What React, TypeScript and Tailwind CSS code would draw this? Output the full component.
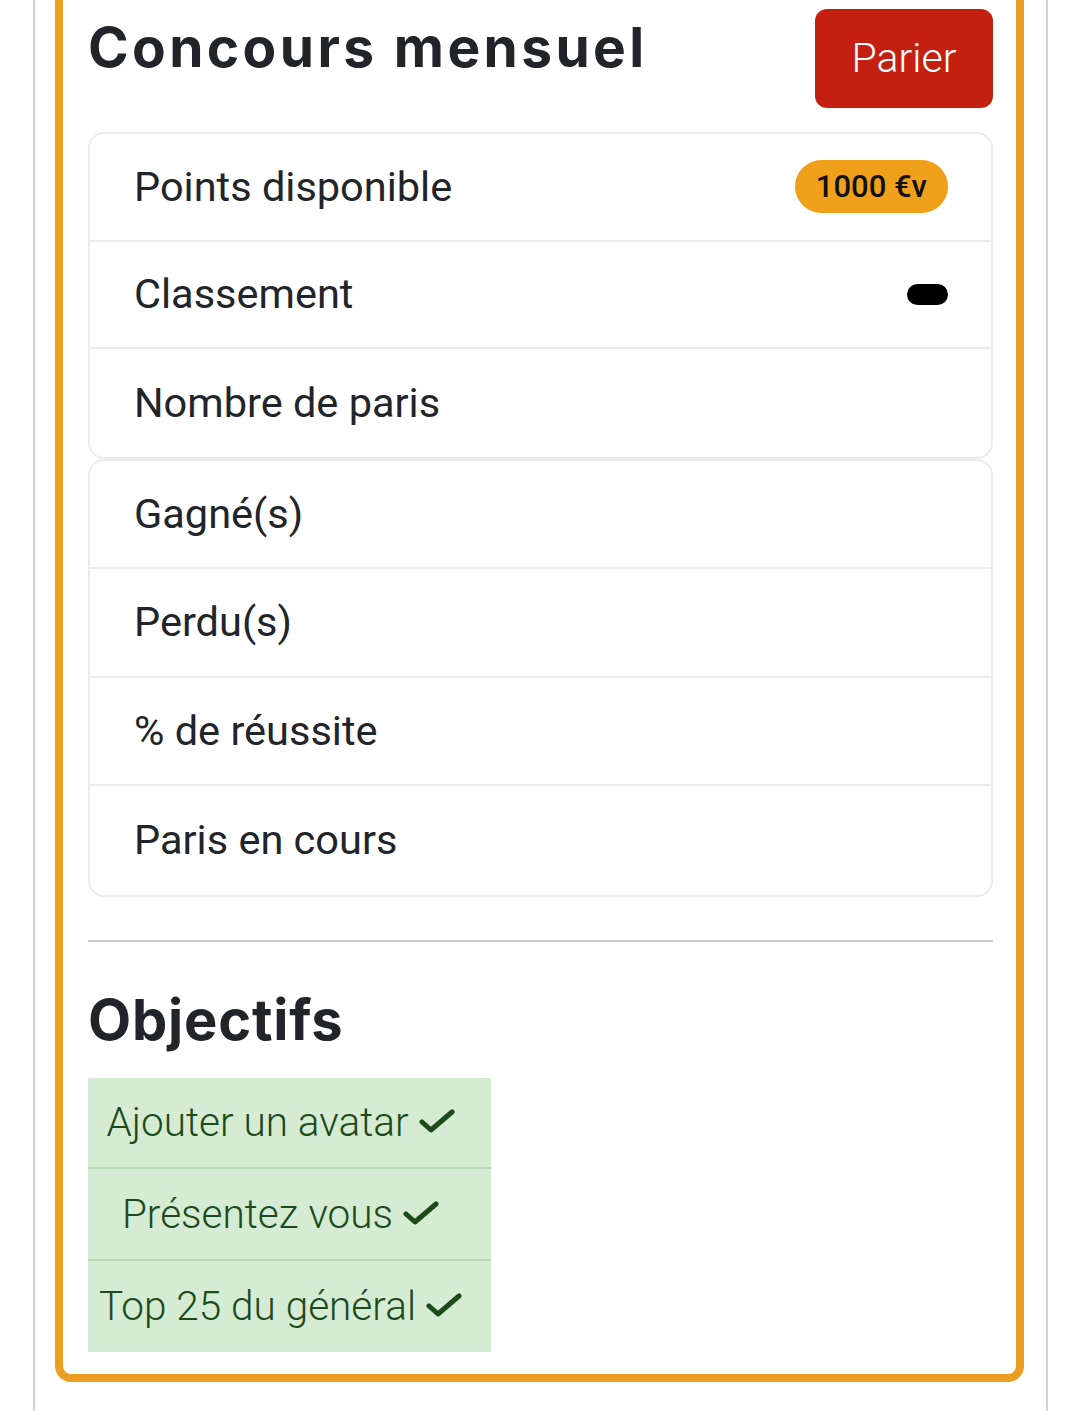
import React from 'react';

const statsTop = ['Points disponible', 'Classement', 'Nombre de paris'];
const statsBottom = ['Gagné(s)', 'Perdu(s)', '% de réussite', 'Paris en cours'];
const goals = ['Ajouter un avatar', 'Présentez vous', 'Top 25 du général'];

function CheckIcon() {
  return (
    <svg width="36" height="26" viewBox="0 0 36 26" className="shrink-0">
      <polyline
        points="3,13 12,21 33,3"
        fill="none"
        stroke="#1c4a1a"
        strokeWidth="5"
        strokeLinecap="round"
        strokeLinejoin="round"
      />
    </svg>
  );
}

function StatRow({
  label,
  last,
  tall,
  children,
}: {
  label: string;
  last?: boolean;
  tall?: boolean;
  children?: React.ReactNode;
}) {
  return (
    <div
      className={`flex items-center justify-between pl-[44px] pr-[43px] ${tall ? 'h-[108.5px]' : 'h-[107.5px]'} ${
        last ? '' : 'border-b-2 border-[#ececec]'
      }`}
    >
      <span className="text-[41.5px] text-[#212529]">{label}</span>
      {children}
    </div>
  );
}

export default function App() {
  return (
    <div
      className="min-h-[1411px] bg-white"
      style={{ fontFamily: 'Roboto, "Liberation Sans", sans-serif' }}
    >
      <div className="ml-[33px] min-h-[1411px] w-[1015px] border-x-2 border-[#d2d2d2] pl-[20px] pr-[22px]">
        <div className="rounded-b-[16px] border-x-8 border-b-8 border-[#eb9e22] pb-[22px] pl-[25px] pr-[23px] pt-[9px]">
          {/* Header */}
          <div className="flex items-start justify-between">
            <h1
              className="mt-[5px] text-[55px] font-bold leading-[1.2] tracking-[3.4px] text-[#212529]"
              style={{ fontFamily: 'Inter, "Liberation Sans", sans-serif' }}
            >
              Concours mensuel
            </h1>
            <button className="flex h-[99px] w-[178px] items-center justify-center rounded-[12px] bg-[#c32012] text-[41px] font-light text-white">
              Parier
            </button>
          </div>

          {/* Stats */}
          <div className="mt-[24px] overflow-hidden rounded-[16px] border-2 border-[#ececec]">
            {statsTop.map((s, i) => (
              <StatRow key={s} label={s} last={i === statsTop.length - 1}>
                {i === 0 && (
                  <span className="flex h-[53px] items-center rounded-full bg-[#f0a01b] px-[21px] text-[31px] font-medium text-[#111]">
                    1000 €v
                  </span>
                )}
                {i === 1 && <span className="h-[21px] w-[41px] rounded-full bg-black" />}
              </StatRow>
            ))}
          </div>
          <div className="overflow-hidden rounded-[16px] border-2 border-[#ececec]">
            {statsBottom.map((s, i) => (
              <StatRow key={s} label={s} tall last={i === statsBottom.length - 1} />
            ))}
          </div>

          <hr className="mt-[43px] border-t-2 border-[#cacaca]" />

          {/* Objectifs */}
          <h2
            className="mt-[45px] text-[56px] font-bold leading-[1.2] tracking-[0.8px] text-[#212529]"
            style={{ fontFamily: 'Inter, "Liberation Sans", sans-serif' }}
          >
            Objectifs
          </h2>
          <div className="mt-[24px] w-[403px] bg-[#d6ebd4]">
            {goals.map((g, i) => (
              <div
                key={g}
                className={`flex h-[91.5px] items-center justify-center gap-[10px] pl-[2px] pr-[20px] ${
                  i < goals.length - 1 ? 'border-b-2 border-[#b6d9b3]' : ''
                }`}
              >
                <span className="text-[40.5px] font-light text-[#1c4a1a]">{g}</span>
                <CheckIcon />
              </div>
            ))}
          </div>
        </div>
      </div>
    </div>
  );
}
